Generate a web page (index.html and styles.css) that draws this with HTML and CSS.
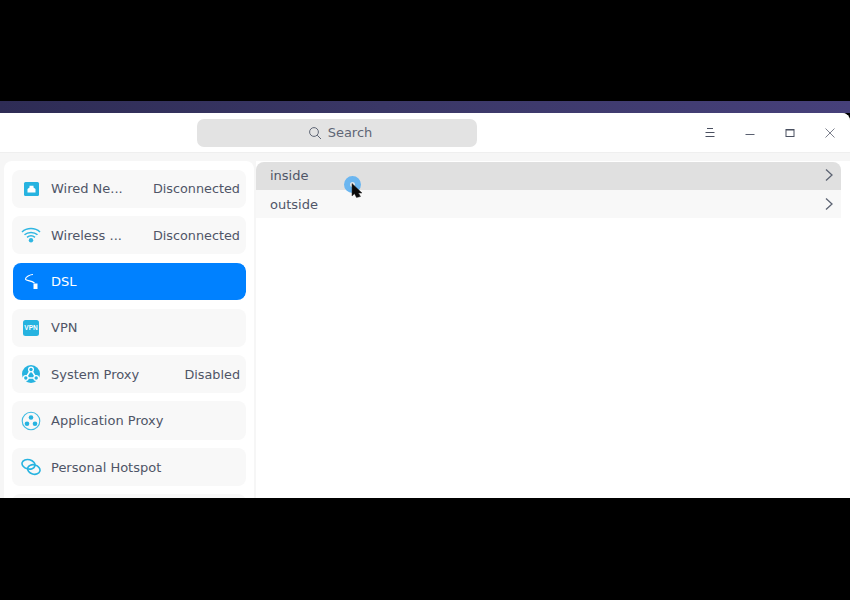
FILE: index.html
```html
<!DOCTYPE html>
<html lang="en">
<head>
<meta charset="utf-8">
<title>Network</title>
<link rel="stylesheet" href="styles.css">
</head>
<body>
<div class="screen">
  <div class="wallpaper"></div>
  <div class="window">
    <header class="titlebar">
      <div class="search">
        <svg class="search-icon" width="14" height="14" viewBox="0 0 14 14"><circle cx="6" cy="6" r="4.400" fill="none" stroke="#5f6675" stroke-width="1"/><path d="M9.200 9.200 13 13" stroke="#5f6675" stroke-width="1" fill="none"/></svg>
        <span>Search</span>
      </div>
      <div class="controls">
        <button class="ctl"><svg width="12" height="12" viewBox="0 0 12 12"><path d="M3 1.500h6M1.500 5.500h9M1.500 9.500h9" stroke="#4a5060" stroke-width="1" fill="none"/></svg></button>
        <button class="ctl"><svg width="12" height="12" viewBox="0 0 12 12"><path d="M1.500 7.500h9" stroke="#5a6070" stroke-width="1" fill="none"/></svg></button>
        <button class="ctl"><svg width="12" height="12" viewBox="0 0 12 12"><rect x="2" y="2.500" width="8" height="7" fill="none" stroke="#4a5060" stroke-width="1"/><path d="M2 3h8" stroke="#4a5060" stroke-width="1"/></svg></button>
        <button class="ctl"><svg width="12" height="12" viewBox="0 0 12 12"><path d="M1.500 1.500l9 9M10.500 1.500l-9 9" stroke="#5a6070" stroke-width="0.800" fill="none"/></svg></button>
      </div>
    </header>
    <div class="body">
      <nav class="sidebar">
        <div class="item">
          <svg class="ico" width="20" height="20" viewBox="0 0 20 20"><rect x="3" y="3" width="15" height="14" rx="1.500" fill="#26b3e0"/><path d="M6.500 13.500V10L8.500 8.500V6.800h4V8.500L14.500 10v3.500z" fill="#fff"/></svg>
          <span class="label">Wired Ne...</span><span class="value">Disconnected</span>
        </div>
        <div class="item">
          <svg class="ico" width="20" height="20" viewBox="0 0 20 20"><g fill="none" stroke="#2fb6e2" stroke-width="1.500"><path d="M1 7C5.800 2.300 14.200 2.300 19 7"/><path d="M3.500 9.800C7 6.600 13 6.600 16.500 9.800"/><path d="M6 12.300C8.300 10.500 11.700 10.500 14 12.300"/></g><circle cx="10" cy="15.200" r="2.200" fill="#2fb6e2"/></svg>
          <span class="label">Wireless ...</span><span class="value">Disconnected</span>
        </div>
        <div class="item active">
          <svg class="ico" width="20" height="20" viewBox="0 0 20 20"><path d="M12 3.500C9 3.500 4.500 6 4.500 8C4.500 10 10 9 13.500 12" fill="none" stroke="#fff" stroke-width="1.100"/><path d="M12.500 12.500h4V18h-4z" fill="#fff"/></svg>
          <span class="label">DSL</span>
        </div>
        <div class="item">
          <svg class="ico" width="20" height="20" viewBox="0 0 20 20"><rect x="2" y="2" width="16" height="16" rx="2.500" fill="#26b3e0"/><text x="10" y="12.300" class="vpn">VPN</text></svg>
          <span class="label">VPN</span>
        </div>
        <div class="item">
          <svg class="ico" width="20" height="20" viewBox="0 0 20 20"><circle cx="10" cy="10" r="9" fill="#26b3e0"/><path d="M10 5.500 4.800 14H15.200Z" fill="none" stroke="#fff" stroke-width="1.500"/><g fill="#fff"><circle cx="10" cy="5.500" r="3"/><circle cx="4.800" cy="14" r="3"/><circle cx="15.200" cy="14" r="3"/></g><g fill="#26b3e0"><circle cx="10" cy="5.500" r="1.700"/><circle cx="4.800" cy="14" r="1.700"/><circle cx="15.200" cy="14" r="1.700"/></g></svg>
          <span class="label">System Proxy</span><span class="value">Disabled</span>
        </div>
        <div class="item">
          <svg class="ico" width="20" height="20" viewBox="0 0 20 20"><circle cx="10" cy="10" r="8.800" fill="none" stroke="#3dbbe3" stroke-width="1.100"/><circle cx="10" cy="6.500" r="2.300" fill="#26b3e0"/><circle cx="6" cy="12.800" r="2.300" fill="#26b3e0"/><circle cx="14" cy="12.800" r="2.300" fill="#26b3e0"/></svg>
          <span class="label">Application Proxy</span>
        </div>
        <div class="item">
          <svg class="ico" width="20" height="20" viewBox="0 0 20 20"><g fill="none" stroke="#26b3e0" stroke-width="1.600"><ellipse cx="7.500" cy="7.300" rx="6.600" ry="4.700" transform="rotate(15 7.500 7.300)"/><ellipse cx="12.800" cy="12.500" rx="6.300" ry="4.700" transform="rotate(15 12.800 12.500)"/></g></svg>
          <span class="label">Personal Hotspot</span>
        </div>
        <div class="item"></div>
      </nav>
      <main class="content">
        <div class="row hover">
          <span>inside</span>
          <svg width="10" height="14" viewBox="0 0 10 14"><path d="M2 1.500 8 7 2 12.500" fill="none" stroke="#5d6473" stroke-width="1.300"/></svg>
        </div>
        <div class="row">
          <span>outside</span>
          <svg width="10" height="14" viewBox="0 0 10 14"><path d="M2 1.500 8 7 2 12.500" fill="none" stroke="#5d6473" stroke-width="1.300"/></svg>
        </div>
        <div class="cursor">
          <span class="ring"></span>
          <svg class="pointer" width="12" height="16" viewBox="0 0 12 16"><path d="M1 .5V13l2.500-2.300 2 3.800 4-1-2-3.500H11z" fill="#0a0a0a" stroke="#333" stroke-width=".5"/></svg>
        </div>
      </main>
    </div>
  </div>
</div>
</body>
</html>
```

FILE: styles.css
```css
* { box-sizing: border-box; }
html, body { margin: 0; height: 100%; background: #000; overflow: hidden; }
body { font-family: "DejaVu Sans", sans-serif; font-size: 13px; color: #4f5567; }
.screen { width: 850px; height: 600px; padding-top: 101px; }
.wallpaper { height: 12px; background: linear-gradient(90deg, #2e2c55 0%, #3a3766 45%, #46407a 100%); }
.window { height: 385px; background: #f7f7f7; border-radius: 0 8px 0 0; overflow: hidden; display: flex; flex-direction: column; }
.titlebar { height: 40px; flex: none; background: #fff; display: flex; align-items: center; border-bottom: 1px solid #efefef; }
.search { margin-left: 197px; width: 280px; height: 28px; background: #e3e3e3; border-radius: 7px; display: flex; align-items: center; justify-content: center; gap: 6px; padding-left: 6px; color: #5f6675; }
.search-icon { flex: none; }
.controls { margin-left: auto; display: flex; }
.ctl { width: 40px; height: 40px; border: 0; padding: 0; background: none; display: flex; align-items: center; justify-content: center; }
.body { flex: 1; min-height: 0; display: flex; background: #f6f6f6; padding: 8px 0 0 4px; }
.sidebar { width: 250px; flex: none; background: #fff; border-radius: 8px 8px 0 0; padding: 8.500px 8px 0 8px; display: flex; flex-direction: column; gap: 8px; overflow: hidden; }
.item { flex: none; height: 38.400px; width: 234px; background: #f8f8f8; border-radius: 8px; display: flex; align-items: center; padding: 0 6px 0 9px; }
.item.active { background: #0081ff; background-clip: padding-box; border: solid transparent; border-width: 1px 0 1px 1px; border-radius: 9px; padding: 0 6px 0 8px; color: #fff; }
.ico { flex: none; margin-right: 10px; }
.label { flex: 1; white-space: nowrap; }
.value { white-space: nowrap; font-size: 12.800px; }
.vpn { font-family: "Liberation Sans Narrow", "Liberation Sans", sans-serif; font-size: 6.500px; font-weight: 700; fill: #fff; text-anchor: middle; }
.content { flex: 1; margin-left: 2px; background: #fff; position: relative; padding: 1px 9px 0 0; }
.row { height: 28px; background: #f8f8f8; display: flex; align-items: center; justify-content: space-between; padding: 0 7px 0 14px; }
.row.hover { background: #e0e0e0; border-radius: 8px 8px 0 0; padding-bottom: 2px; }
.row:last-of-type { border-radius: 0 0 8px 8px; }
.cursor { position: absolute; left: 88px; top: 15px; width: 20px; height: 24px; }
.ring { position: absolute; left: 0; top: 0; width: 17px; height: 17px; border-radius: 50%; border: 6px solid #6bb6f0; background: #dfe5ea; }
.pointer { position: absolute; left: 7px; top: 7px; }
```
